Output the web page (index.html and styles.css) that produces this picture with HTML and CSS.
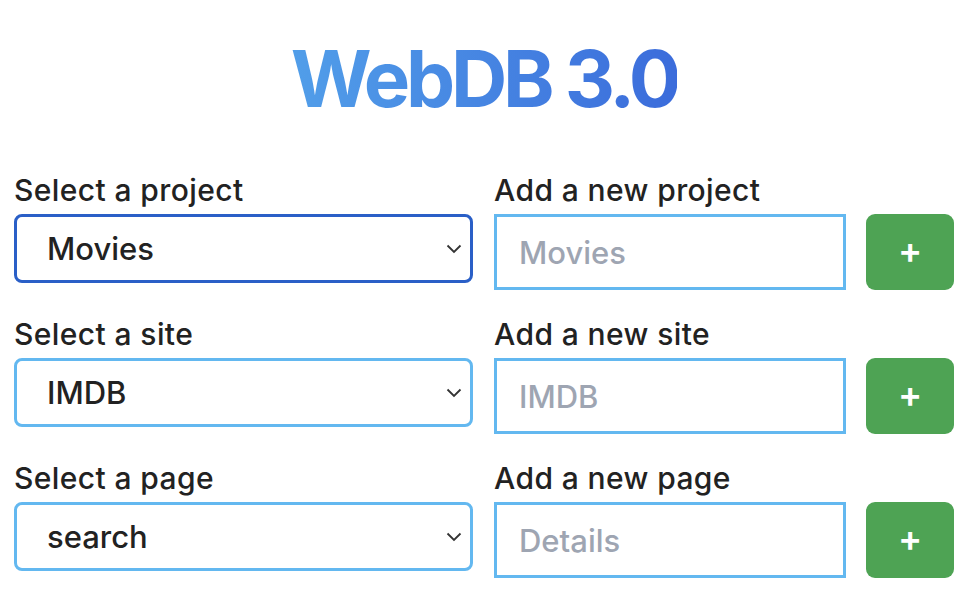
FILE: index.html
```html
<!DOCTYPE html>
<html lang="en">
<head>
<meta charset="utf-8">
<title>WebDB 3.0</title>
<link rel="stylesheet" href="styles.css">
</head>
<body>
<main class="page">
  <h1 class="title">WebDB 3.0</h1>
  <div class="form">
    <div class="field">
      <label class="label">Select a project</label>
      <div class="select-wrap">
        <select class="select select-focus"><option>Movies</option></select>
        <svg class="chev" width="16" height="10" viewBox="0 0 16 10"><path d="M1.5 1.5 L8 8 L14.5 1.5" fill="none" stroke="#333" stroke-width="1.8"/></svg>
      </div>
    </div>
    <div class="field">
      <label class="label">Add a new project</label>
      <div class="add-row">
        <input class="input" placeholder="Movies">
        <button class="btn">+</button>
      </div>
    </div>
    <div class="field">
      <label class="label">Select a site</label>
      <div class="select-wrap">
        <select class="select"><option>IMDB</option></select>
        <svg class="chev" width="16" height="10" viewBox="0 0 16 10"><path d="M1.5 1.5 L8 8 L14.5 1.5" fill="none" stroke="#333" stroke-width="1.8"/></svg>
      </div>
    </div>
    <div class="field">
      <label class="label">Add a new site</label>
      <div class="add-row">
        <input class="input" placeholder="IMDB">
        <button class="btn">+</button>
      </div>
    </div>
    <div class="field">
      <label class="label">Select a page</label>
      <div class="select-wrap">
        <select class="select"><option>search</option></select>
        <svg class="chev" width="16" height="10" viewBox="0 0 16 10"><path d="M1.5 1.5 L8 8 L14.5 1.5" fill="none" stroke="#333" stroke-width="1.8"/></svg>
      </div>
    </div>
    <div class="field">
      <label class="label">Add a new page</label>
      <div class="add-row">
        <input class="input" placeholder="Details">
        <button class="btn">+</button>
      </div>
    </div>
  </div>
</main>
</body>
</html>
```
FILE: styles.css
```css
* { box-sizing: border-box; }
html, body { margin: 0; padding: 0; background: #fff; }
body { font-family: Inter, "Noto Sans", sans-serif; color: #222; }
.page { padding: 40px 12px 0 14px; }
.title {
  margin: 0 auto 55px auto;
  width: max-content;
  text-align: center;
  font-size: 78px;
  line-height: 78px;
  font-weight: 700;
  letter-spacing: -4.2px;
  background: linear-gradient(to right, #519ee9, #3b6cdb);
  -webkit-background-clip: text;
  background-clip: text;
  color: transparent;
}
.form {
  display: grid;
  grid-template-columns: 459px 460px;
  column-gap: 21px;
  row-gap: 27px;
  align-items: start;
}
.field { display: flex; flex-direction: column; }
.label {
  font-size: 30px;
  line-height: 34px;
  font-weight: 500;
  letter-spacing: 0.4px;
  color: #222;
  margin-bottom: 7px;
}
.select-wrap { position: relative; }
.select {
  width: 100%;
  height: 69px;
  border: 3px solid #63b8f0;
  border-radius: 8px;
  padding: 0 40px 0 30px;
  font-family: inherit;
  font-size: 31px;
  font-weight: 500;
  color: #222;
  background: #fff;
  -webkit-appearance: none;
  appearance: none;
  outline: none;
}
.select-focus { border-color: #2a5fc7; }
.chev { position: absolute; right: 11px; top: 30px; pointer-events: none; }
.add-row { display: flex; gap: 20px; }
.input {
  width: 352px;
  height: 76px;
  border: 3px solid #63b8f0;
  border-radius: 0;
  padding: 0 20px 0 22px;
  font-family: inherit;
  font-size: 31px;
  font-weight: 500;
  color: #222;
  outline: none;
}
.input::placeholder { color: #9ea5b2; }
.btn {
  width: 88px;
  height: 76px;
  border: none;
  border-radius: 9px;
  background: #4ea354;
  color: #fff;
  font-family: inherit;
  font-size: 36px;
  font-weight: 600;
  line-height: 1;
  padding: 0 0 4px 0;
}
```
